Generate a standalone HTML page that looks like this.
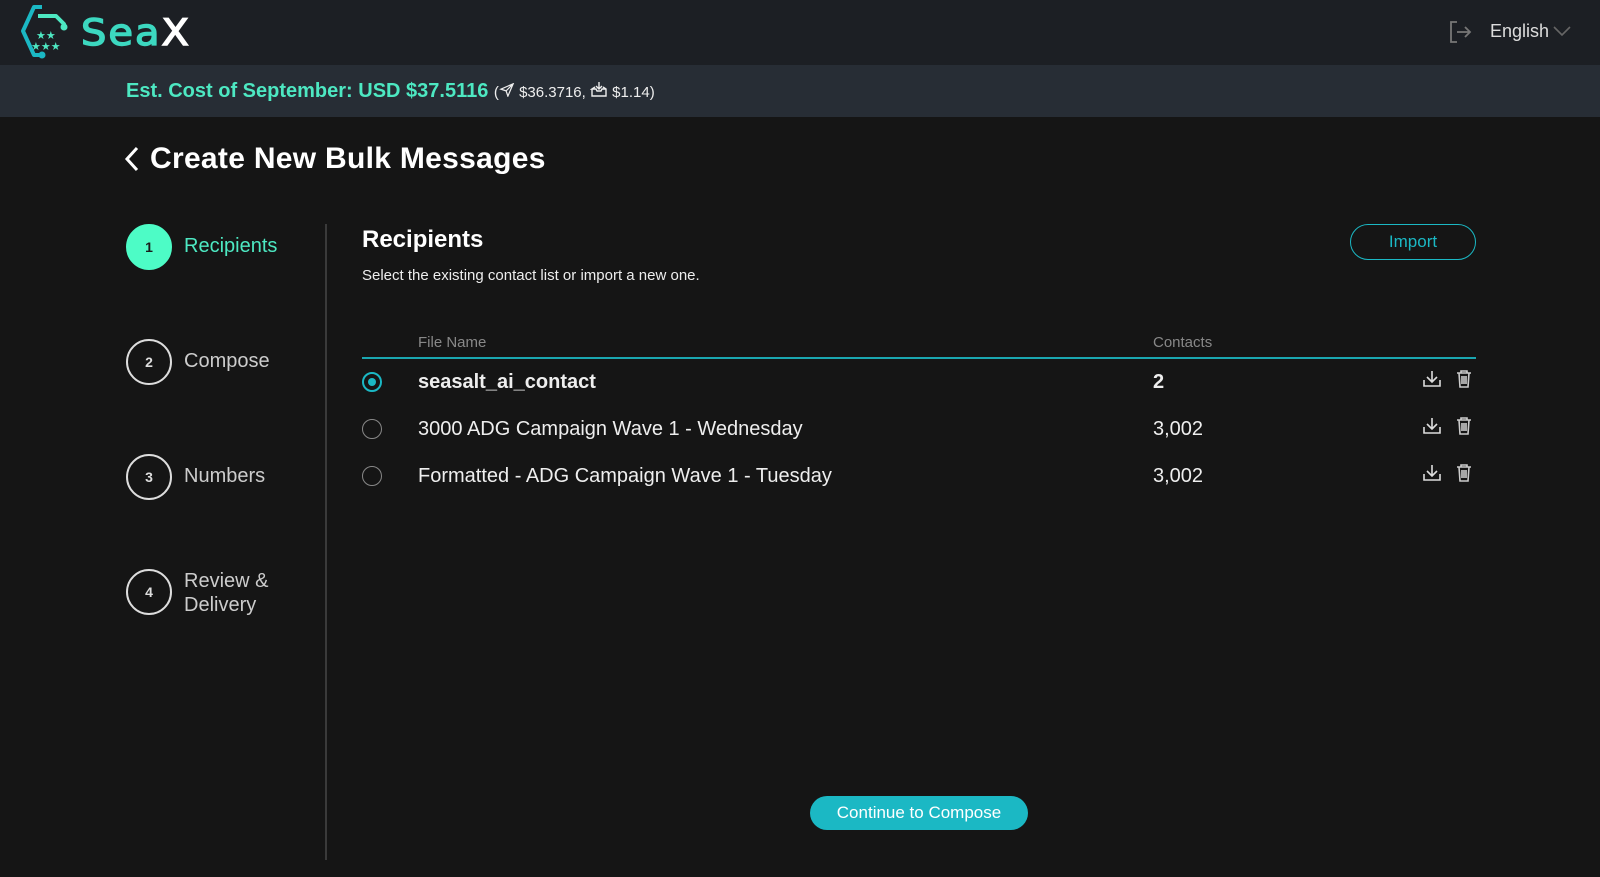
<!DOCTYPE html>
<html><head><meta charset="utf-8"><style>
*{margin:0;padding:0;box-sizing:border-box}
body{width:1600px;height:877px;background:#151515;font-family:"Liberation Sans",sans-serif;color:#fff;position:relative;overflow:hidden}
.abs{position:absolute}
.top{left:0;top:0;width:1600px;height:65px;background:#1c1f24}
.cost{left:0;top:65px;width:1600px;height:52px;background:#272d35}
.step{left:126px;width:46px;height:46px;border-radius:50%;border:2px solid #ddd;color:#ddd;font-size:14px;font-weight:bold;display:flex;align-items:center;justify-content:center}
.sl{left:184px;font-size:20px;color:#ccc}
.row{font-size:20px;color:#eee}
.radio{left:362px;width:20px;height:20px;border-radius:50%;border:1.5px solid #888}
</style></head><body>
<div class="abs top"></div>
<svg class="abs" style="left:18px;top:4px" width="60" height="56" viewBox="0 0 60 56">
<path d="M24 3 H16 L5 27 L16 51 H24" fill="none" stroke="#1bb8c4" stroke-width="4" stroke-linejoin="round"/>
<path d="M20 12 H38 L46 20 V22" fill="none" stroke="#4de8c2" stroke-width="4" stroke-linejoin="round"/>
<circle cx="46" cy="23" r="3.5" fill="#4de8c2"/><circle cx="24" cy="51" r="3.5" fill="#1bb8c4"/>
<text x="18" y="35" font-size="11" fill="#4de8c2">★★</text>
<text x="13" y="46" font-size="11" fill="#4de8c2">★★★</text>
</svg>
<div class="abs" style="left:81px;top:10px;font-size:40px;font-family:'DejaVu Sans',sans-serif;letter-spacing:2px;color:#3cd8c0;transform:scaleY(0.92);-webkit-text-stroke:1.5px #3cd8c0">Sea<span style="color:#fff;-webkit-text-stroke:1.5px #fff">X</span></div>
<svg class="abs" style="left:1448px;top:20px" width="24" height="24" viewBox="0 0 24 24" fill="none" stroke="#777" stroke-width="1.8"><path d="M9 2H3v20h6M9 12h13M17 7l5 5-5 5"/></svg>
<div class="abs" style="left:1490px;top:21px;font-size:18px;color:#ddd">English</div>
<svg class="abs" style="left:1552px;top:24px" width="20" height="14" viewBox="0 0 20 14" fill="none" stroke="#666" stroke-width="1.6"><path d="M2 3l8 8 8-8"/></svg>
<div class="abs cost"></div>
<div class="abs" style="left:126px;top:80px;font-size:20px;font-weight:bold;color:#4de8c2">Est. Cost of September: USD $37.5116 <span style="font-weight:normal;font-size:15px;color:#eee">(<svg width="16" height="14" viewBox="0 0 16 16" fill="none" stroke="#eee" stroke-width="1.4"><path d="M15 1L1 7l6 2 2 6z M15 1L7 9"/></svg> $36.3716, <svg width="18" height="16" viewBox="0 0 16 16" fill="none" stroke="#eee" stroke-width="1.4"><path d="M1 8v7h14V8l-3-2M4 6L1 8h4l1 2h4l1-2h4M8 1v7M5 5l3 3 3-3"/></svg> $1.14)</span></div>
<svg class="abs" style="left:124px;top:146px" width="18" height="26" viewBox="0 0 18 26" fill="none" stroke="#fff" stroke-width="3"><path d="M13 2L3 13l10 11"/></svg>
<div class="abs" style="left:150px;top:142px;font-size:30px;font-weight:bold;letter-spacing:0.3px">Create New Bulk Messages</div>
<div class="abs step" style="top:224px;background:#4dfcc6;border-color:#4dfcc6;color:#1a1a1a">1</div>
<div class="abs sl" style="top:235px;color:#4de8c2">Recipients</div>
<div class="abs step" style="top:339px">2</div><div class="abs sl" style="top:350px">Compose</div>
<div class="abs step" style="top:454px">3</div><div class="abs sl" style="top:465px">Numbers</div>
<div class="abs step" style="top:569px">4</div><div class="abs sl" style="top:569px;line-height:24px">Review &amp;<br>Delivery</div>
<div class="abs" style="left:325px;top:224px;width:2px;height:636px;background:#3a3a3a"></div>
<div class="abs" style="left:362px;top:226px;font-size:24px;font-weight:bold">Recipients</div>
<div class="abs" style="left:362px;top:267px;font-size:15px;color:#eee">Select the existing contact list or import a new one.</div>
<div class="abs" style="left:1350px;top:224px;width:126px;height:36px;border:1.5px solid #1bb8c4;border-radius:18px;color:#1bb8c4;font-size:17px;display:flex;align-items:center;justify-content:center">Import</div>
<div class="abs" style="left:418px;top:334px;font-size:15px;color:#888">File Name</div>
<div class="abs" style="left:1153px;top:334px;font-size:15px;color:#888">Contacts</div>
<div class="abs" style="left:362px;top:357px;width:1114px;height:2px;background:#1aa6b0"></div>
<div class="abs radio" style="top:372px;border-color:#1bb8c4;border-width:2px"><div style="position:absolute;left:4px;top:4px;width:8px;height:8px;border-radius:50%;background:#1bb8c4"></div></div>
<div class="abs radio" style="top:419px"></div>
<div class="abs radio" style="top:466px"></div>
<div class="abs row" style="left:418px;top:371px;font-weight:bold">seasalt_ai_contact</div>
<div class="abs row" style="left:1153px;top:371px;font-weight:bold">2</div>
<div class="abs row" style="left:418px;top:418px">3000 ADG Campaign Wave 1 - Wednesday</div>
<div class="abs row" style="left:1153px;top:418px">3,002</div>
<div class="abs row" style="left:418px;top:465px">Formatted - ADG Campaign Wave 1 - Tuesday</div>
<div class="abs row" style="left:1153px;top:465px">3,002</div>
<svg width="0" height="0" style="position:absolute"><defs>
<g id="dl" fill="none" stroke="#ddd" stroke-width="1.6"><path d="M2 11v6h16v-6M10 2v11M5 8l5 5 5-5"/></g>
<g id="tr" fill="none" stroke="#ccc" stroke-width="1.6"><path d="M2 4h14M6 4V2h6v2M4 4l1 14h8l1-14M7 7v8M9 7v8M11 7v8"/></g></defs></svg>
<svg class="abs" style="left:1422px;top:369px" width="20" height="20"><use href="#dl"/></svg>
<svg class="abs" style="left:1455px;top:369px" width="18" height="20"><use href="#tr"/></svg>
<svg class="abs" style="left:1422px;top:416px" width="20" height="20"><use href="#dl"/></svg>
<svg class="abs" style="left:1455px;top:416px" width="18" height="20"><use href="#tr"/></svg>
<svg class="abs" style="left:1422px;top:463px" width="20" height="20"><use href="#dl"/></svg>
<svg class="abs" style="left:1455px;top:463px" width="18" height="20"><use href="#tr"/></svg>
<div class="abs" style="left:810px;top:796px;width:218px;height:34px;border-radius:17px;background:#1bb8c4;color:#fff;font-size:17px;display:flex;align-items:center;justify-content:center">Continue to Compose</div>
</body></html>
